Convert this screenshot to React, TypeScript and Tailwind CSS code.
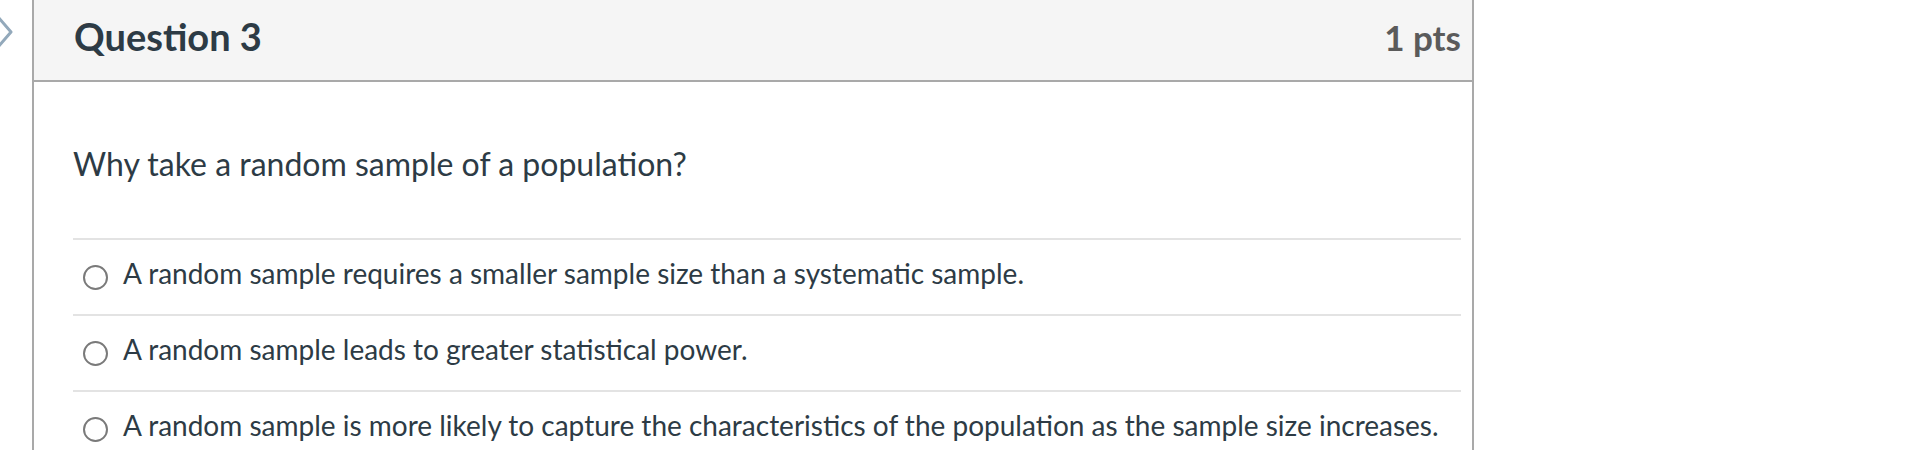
const options = [
  "A random sample requires a smaller sample size than a systematic sample.",
  "A random sample leads to greater statistical power.",
  "A random sample is more likely to capture the characteristics of the population as the sample size increases.",
];

function OptionRow({ label }: { label: string }) {
  return (
    <label className="flex h-[76px] items-start border-t-2 border-[#e3e3e3] pt-[16px]">
      <span className="ml-[10px] mt-[9px] h-[25px] w-[25px] shrink-0 rounded-full border-2 border-[#7a7a7a] bg-white" />
      <span className="ml-[15px] text-[28px] leading-[34px] text-[#2d3b45]">{label}</span>
    </label>
  );
}

export default function App() {
  return (
    <div className="flex h-[450px] overflow-hidden bg-white font-['Lato','Liberation_Sans',sans-serif]">
      <div className="w-[32px] shrink-0 pt-[14px]">
        <svg width="16" height="38" viewBox="0 0 16 38" fill="none">
          <polyline
            points="-2,3 11,18 -2,33"
            stroke="#93a9bb"
            strokeWidth="3"
            strokeLinejoin="round"
          />
        </svg>
      </div>
      <div className="w-[1442px] shrink-0 border-x-2 border-[#a9a9a9]">
        <div className="flex h-[82px] items-start justify-between border-b-2 border-[#a9a9a9] bg-[#f5f5f5] pl-[40px] pr-[11px] pt-[13px]">
          <h2 className="text-[38px] font-bold leading-[46px] text-[#2d3b45]">Question 3</h2>
          <span className="mt-[3px] text-[35px] font-bold leading-[42px] text-[#5b5b5b]">1 pts</span>
        </div>
        <div className="pl-[39px] pr-[11px] pt-[63px]">
          <p className="mb-[55px] text-[32px] leading-[38px] text-[#2d3b45]">
            Why take a random sample of a population?
          </p>
          {options.map((o) => (
            <OptionRow key={o} label={o} />
          ))}
        </div>
      </div>
    </div>
  );
}
